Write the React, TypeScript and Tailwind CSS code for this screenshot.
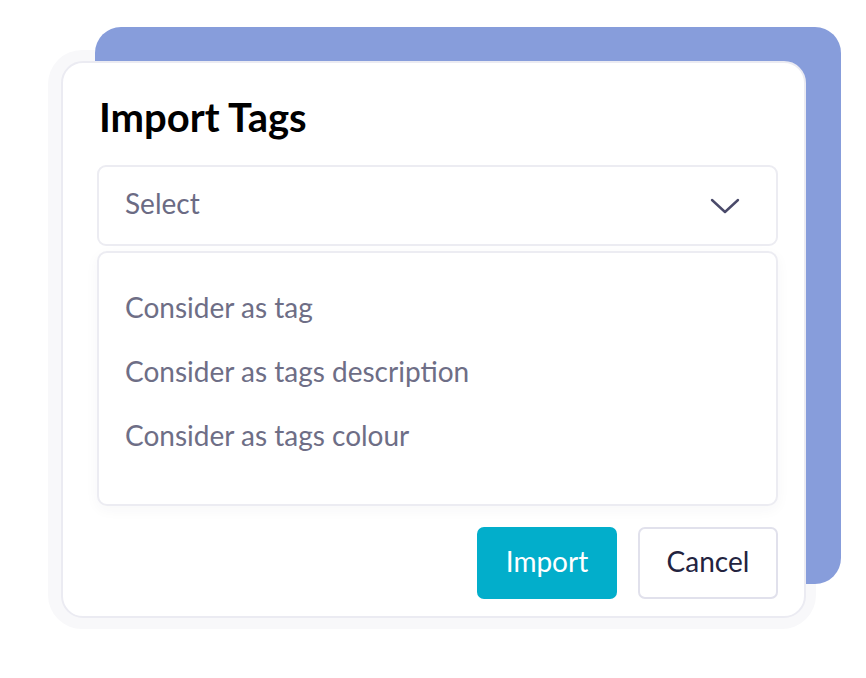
const options = ["Consider as tag", "Consider as tags description", "Consider as tags colour"];

export default function App() {
  return (
    <div className="relative w-[866px] h-[678px] bg-white overflow-hidden" style={{ fontFamily: "Lato, 'Open Sans', sans-serif" }}>
      {/* soft outer frame */}
      <div className="absolute left-[48px] top-[50px] w-[768px] h-[579px] rounded-[34px] bg-[#f8f8fa]" />
      {/* blue backdrop */}
      <div className="absolute left-[95px] top-[27px] w-[746px] h-[557px] rounded-[26px] bg-[#879ddb]" />

      <div className="absolute left-[61px] top-[61px] w-[745px] h-[557px] rounded-[22px] border-2 border-[#ebebf2] bg-white pl-[36px] pr-[26px] pt-[26px]">
        <h1 className="text-[40px] font-bold leading-[56px] text-black">Import Tags</h1>

        <div className="-ml-[2px] mt-[20px] flex h-[81px] items-center justify-between rounded-[9px] border-2 border-[#ececf2] pb-[6px] pl-[26px] pr-[36px]">
          <span className="text-[28px] leading-[40px] text-[#6b6b84]">Select</span>
          <svg width="30" height="18" viewBox="0 0 30 18" fill="none" className="mt-[6px]">
            <path d="M2 3 L15 15 L28 3" stroke="#4a4a6a" strokeWidth="2.4" strokeLinecap="round" strokeLinejoin="round" />
          </svg>
        </div>

        <div className="-ml-[2px] mt-[5px] flex h-[255px] flex-col rounded-[10px] border-2 border-[#ececf2] bg-white pl-[26px] pt-[34px] shadow-[0_4px_14px_rgba(40,40,80,0.04)]">
          {options.map((o) => (
            <div key={o} className="h-[64px] text-[28px] leading-[40px] text-[#6e6e86]">
              {o}
            </div>
          ))}
        </div>

        <div className="mt-[21px] flex justify-end gap-[21px]">
          <button className="h-[72px] w-[140px] rounded-[7px] bg-[#02aecb] pb-[5px] text-[28px] text-white">Import</button>
          <button className="h-[72px] w-[140px] rounded-[7px] border-2 border-[#e1e1ec] bg-white pb-[5px] text-[28px] text-[#23233f]">Cancel</button>
        </div>
      </div>
    </div>
  );
}
